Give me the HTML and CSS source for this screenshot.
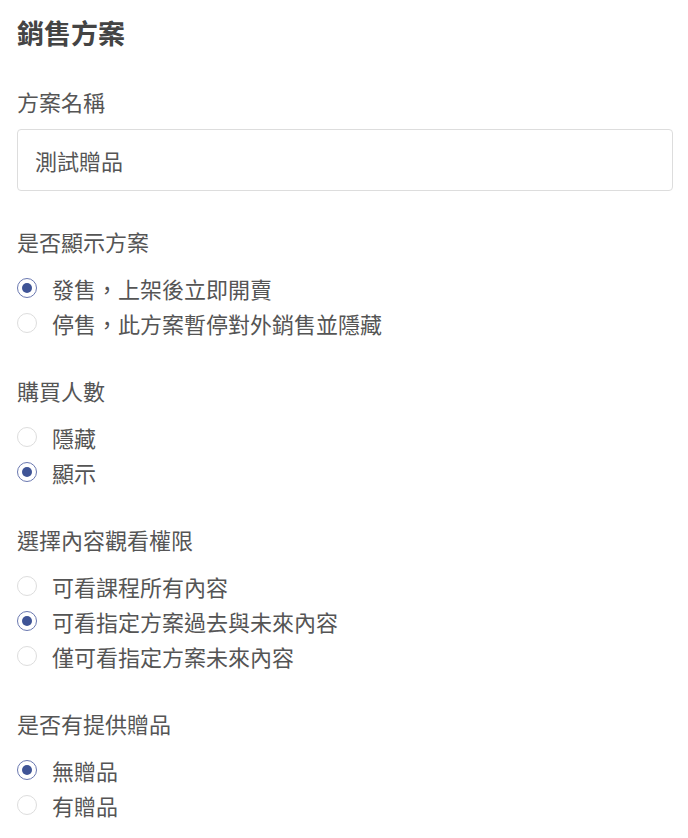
FILE: index.html
```html
<!DOCTYPE html>
<html lang="zh-Hant">
  <head>
    <meta charset="UTF-8" />
    <meta name="viewport" content="width=device-width, initial-scale=1.0" />
    <title>銷售方案</title>
    <link rel="stylesheet" href="styles.css">
  </head>
  <body>
    <div class="plan">
      <h2 class="plan-title">銷售方案</h2>

      <div class="field">
        <div class="field-label">方案名稱</div>
        <div class="text-input">測試贈品</div>
      </div>

      <div class="field">
        <div class="field-label">是否顯示方案</div>
        <div class="options">
          <label class="option"><span class="radio checked"></span>發售，上架後立即開賣</label>
          <label class="option"><span class="radio"></span>停售，此方案暫停對外銷售並隱藏</label>
        </div>
      </div>

      <div class="field">
        <div class="field-label">購買人數</div>
        <div class="options">
          <label class="option"><span class="radio"></span>隱藏</label>
          <label class="option"><span class="radio checked"></span>顯示</label>
        </div>
      </div>

      <div class="field">
        <div class="field-label">選擇內容觀看權限</div>
        <div class="options">
          <label class="option"><span class="radio"></span>可看課程所有內容</label>
          <label class="option"><span class="radio checked"></span>可看指定方案過去與未來內容</label>
          <label class="option"><span class="radio"></span>僅可看指定方案未來內容</label>
        </div>
      </div>

      <div class="field">
        <div class="field-label">是否有提供贈品</div>
        <div class="options">
          <label class="option"><span class="radio checked"></span>無贈品</label>
          <label class="option"><span class="radio"></span>有贈品</label>
        </div>
      </div>
    </div>
  </body>
</html>
```

FILE: styles.css
```css
body {
  margin: 0;
  background: #fff;
  color: #555;
  font-family: 'Noto Sans CJK TC', 'Noto Sans', sans-serif;
  font-size: 22px;
}
.plan {
  padding: 15px 15px 0 17px;
}
.plan-title {
  margin: 0;
  font-size: 27px;
  line-height: 36px;
  font-weight: bold;
  color: #444;
}
.field {
  margin-top: 35px;
}
.field-label {
  line-height: 30px;
}
.text-input {
  margin: 13px 0 9px;
  height: 60px;
  border: 1px solid #ddd;
  border-radius: 4px;
  padding-left: 17px;
  display: flex;
  align-items: center;
  color: #555;
}
.options {
  margin-top: 14px;
  display: flex;
  flex-direction: column;
}
.option {
  display: flex;
  align-items: center;
  height: 35px;
  gap: 15px;
}
.radio {
  width: 18px;
  height: 18px;
  border: 1px solid #ddd;
  border-radius: 50%;
  display: flex;
  align-items: center;
  justify-content: center;
  flex-shrink: 0;
}
.radio.checked {
  border-color: #6a78b0;
}
.radio.checked::after {
  content: '';
  width: 10px;
  height: 10px;
  border-radius: 50%;
  background: #3f5496;
}
```
